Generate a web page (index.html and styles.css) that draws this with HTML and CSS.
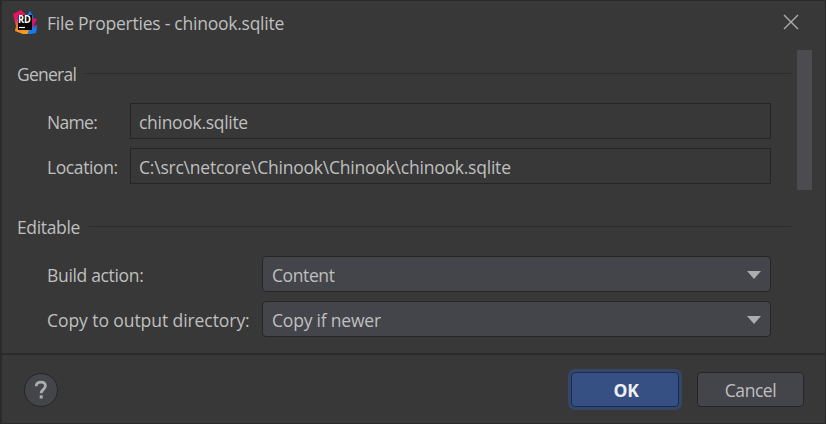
FILE: index.html
```html
<!DOCTYPE html>
<html lang="en">
<head>
<meta charset="utf-8">
<title>File Properties - chinook.sqlite</title>
<link rel="stylesheet" href="styles.css">
</head>
<body>
<main class="dialog">
  <header class="titlebar">
    <svg class="logo" width="26" height="26" viewBox="0 0 26 26" aria-hidden="true">
      <defs>
        <linearGradient id="warm" x1="0" y1="0" x2="0" y2="1">
          <stop offset=".35" stop-color="#e6125f"/>
          <stop offset=".65" stop-color="#f06a3a"/>
          <stop offset="1" stop-color="#ffa812"/>
        </linearGradient>
      </defs>
      <path d="M14 5 17 1 20 6 22 20 16 24 14 19Z" fill="#087cfa"/>
      <path d="M15 19 24 15 23 23 16 24Z" fill="#187fe8"/>
      <path d="M19 8 24 9 21 15 24 19 19 19Z" fill="#d5146d"/>
      <path d="M0 4 8 0 14 6 19 6 15 24 10 24 2 21 3 16Z" fill="url(#warm)"/>
      <path d="M14 24 18 19 20 16 24 19 22 23Z" fill="#137af0"/>
      <path d="M15 6 17 1 20 6Z" fill="#087cfa"/>
      <path d="M5 5H19V20H5Z" fill="#000"/>
      <path d="M6 17.5H12" stroke="#fff" stroke-width="1.2"/>
      <text x="5" y="12.6" class="logo-text" textLength="13" lengthAdjust="spacingAndGlyphs">RD</text>
    </svg>
    <h1 class="title">File Properties - chinook.sqlite</h1>
    <svg class="close" width="16" height="16" viewBox="0 0 16 16" role="img" aria-label="Close">
      <path d="M1 1 15 15M15 1 1 15" stroke="#adadad" stroke-width="1.4" fill="none"/>
    </svg>
  </header>
  <div class="body">
    <div class="content">
      <h2 class="section"><span class="t-general">General</span></h2>
      <div class="rows general">
        <label class="t-name">Name:</label>
        <div class="field"><span class="t-file">chinook.sqlite</span></div>
        <label class="t-location">Location:</label>
        <div class="field"><span class="t-path">C:\src\netcore\Chinook\Chinook\chinook.sqlite</span></div>
      </div>
      <h2 class="section second"><span class="t-editable">Editable</span></h2>
      <div class="rows editable">
        <label class="t-build">Build action:</label>
        <div class="combo"><span class="t-content">Content</span><i class="arrow"></i></div>
        <label class="t-copy">Copy to output directory:</label>
        <div class="combo"><span class="t-newer">Copy if newer</span><i class="arrow"></i></div>
      </div>
    </div>
    <div class="scrollbar"></div>
  </div>
  <footer class="footer">
    <button class="help" aria-label="Help">
      <svg width="14" height="20" viewBox="0 0 14 20" aria-hidden="true">
        <path d="M2.2 6.2C2.2 3.3 4.2 2.2 6.8 2.2s4.6 1.2 4.6 3.8c0 3.4-4.2 3.5-4.2 7.3" fill="none" stroke="#adadad" stroke-width="2.8"/>
        <path d="M5.7 15.3H8.7V18.5H5.7Z" fill="#adadad"/>
      </svg>
    </button>
    <button class="btn primary">OK</button>
    <button class="btn"><span class="t-cancel">Cancel</span></button>
  </footer>
</main>
</body>
</html>
```
FILE: styles.css
```css
* { box-sizing: border-box; }
body {
  margin: 0;
  background: #383838;
  color: #bfbfbf;
  font: 17.5px/24px "Open Sans", "Noto Sans", sans-serif;
}
h1, h2 { margin: 0; font: inherit; }
span, label, h1 { white-space: nowrap; }
.dialog {
  width: 826px;
  height: 424px;
  display: flex;
  flex-direction: column;
  border: 1px solid #2a2a2a;
  border-left-width: 2px;
  overflow: hidden;
}
.titlebar {
  height: 49px;
  flex: none;
  display: flex;
  align-items: center;
  padding: 0 26px 6px 11px;
}
.logo { flex: none; }
.logo-text { font: bold 10px "Open Sans", sans-serif; fill: #fff; }
.title { margin-left: 8px; flex: 1; letter-spacing: -.24px; }
.close { position: relative; top: -1px; }
.body { flex: 1; display: flex; }
.content { width: 789px; padding-top: 12px; }
.section {
  display: flex;
  align-items: center;
  height: 24px;
  padding-left: 15px;
}
.section::after {
  content: "";
  flex: 1;
  height: 1px;
  margin: 0 0 2px 9px;
  background: #2d2d2d;
}
.rows {
  display: grid;
  grid-template-rows: 36px 36px;
  row-gap: 9px;
  align-items: center;
  padding: 0 20px 0 45px;
}
.rows label { padding-top: 2px; }
.general { grid-template-columns: 83px 1fr; margin-top: 17px; }
.second { margin-top: 31px; }
.editable { grid-template-columns: 214px 1fr; margin-top: 17px; }
.field {
  height: 36px;
  padding: 6px 0 0 8px;
  border: 1px solid #252525;
}
.combo {
  height: 36px;
  display: flex;
  align-items: center;
  justify-content: space-between;
  padding: 2px 9px 0 9px;
  margin-left: 1px;
  border: 1px solid #252525;
  border-radius: 4px;
  background: #44454a;
}
.arrow {
  width: 14px;
  height: 8px;
  background: #adadb0;
  clip-path: polygon(0 0, 100% 0, 50% 100%);
}
.scrollbar { width: 15px; height: 140px; margin-left: 6px; background: #4c4b50; }
.footer {
  height: 70px;
  flex: none;
  display: flex;
  align-items: flex-start;
  padding: 18px 21px 0 22px;
  border-top: 2px solid #2b2b2b;
}
.help, .btn {
  font: inherit;
  color: inherit;
  padding: 0;
  border: 1px solid #252525;
  background: #44454a;
}
.help {
  width: 34px;
  height: 34px;
  margin-right: auto;
  border-radius: 50%;
  display: flex;
  align-items: center;
  justify-content: center;
}
.btn { width: 107px; height: 35px; border-radius: 4px; margin-top: -1px; }
.primary {
  width: 108px;
  margin-right: 18px;
  padding-left: 2px;
  color: #f0f0f0;
  font-weight: 700;
  background: #365084;
  border-color: #182b55;
  box-shadow: 0 0 0 3px #344769;
  letter-spacing: -.3px;
}
.t-general { letter-spacing: -.75px; }
.t-name { letter-spacing: -.7px; }
.t-file { letter-spacing: -.3px; }
.t-location { letter-spacing: -.4px; }
.t-path { letter-spacing: -.22px; }
.t-editable { letter-spacing: -.35px; }
.t-build { letter-spacing: -.33px; }
.t-content { letter-spacing: -.4px; }
.t-copy { letter-spacing: -.07px; }
.t-newer { letter-spacing: -.2px; }
.t-cancel { letter-spacing: -.45px; }
```
